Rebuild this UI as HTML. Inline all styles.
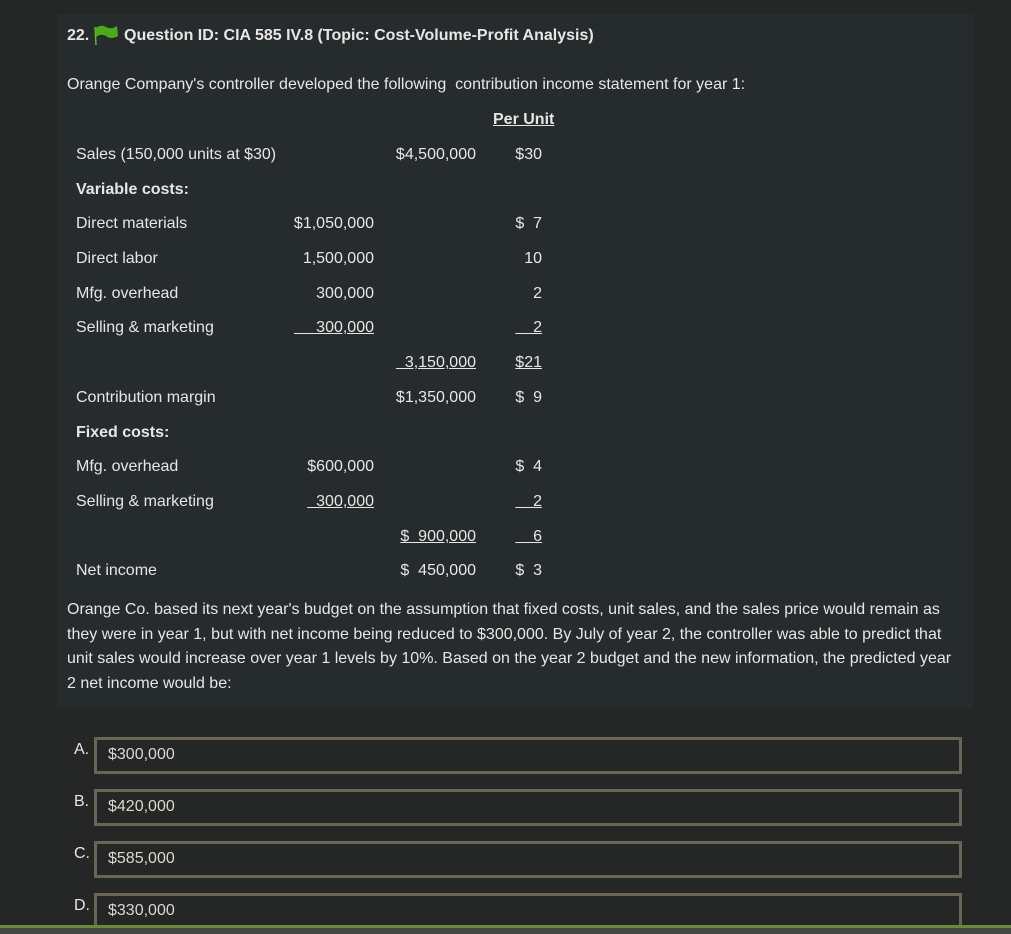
<!DOCTYPE html>
<html><head><style>
body{margin:0;width:1011px;height:934px;background:#252626;font-family:"Liberation Sans",sans-serif;color:#e8e6e3;position:relative;overflow:hidden;font-size:16px}
.panel{position:absolute;left:57px;top:14px;width:916px;height:694px;background:#262b2e}
.a{position:absolute;white-space:nowrap;line-height:18px}
.r{text-align:right}
.u{text-decoration:underline}
.b{font-weight:bold}
.p{position:absolute;left:67px;top:598px;width:892px;line-height:24.5px}
.box{position:absolute;left:94px;width:862px;height:31px;border:3px solid #6b6558;background:#252626}
.box span{position:absolute;left:11px;top:6px;color:#dcd8cf}
.lab{position:absolute;left:74px;color:#e8e6e3}
</style></head><body>
<div class="panel"></div>
<div class="a b" style="left:67px;top:27px">22.</div>
<svg style="position:absolute;left:92px;top:23px" width="28" height="24" viewBox="0 0 28 24"><path d="M3 4 L4 22" stroke="#5fb82b" stroke-width="1.5"/><path d="M3 5 Q10 1 14 4 Q19 7 25 3 L26 13 Q19 17 14 13 Q9 10 4 14 Z" fill="#4aab17"/></svg>
<div class="a b" style="left:124px;top:27px">Question ID: CIA 585 IV.8 (Topic: Cost-Volume-Profit Analysis)</div>
<div class="a" style="left:67px;top:76px">Orange Company's controller developed the following&nbsp; contribution income statement for year 1:</div>
<div class="a b u" style="left:493px;top:111px">Per Unit</div>

<div class="a" style="left:76px;top:146px">Sales (150,000 units at $30)</div>
<div class="a r" style="right:535px;top:146px">$4,500,000</div>
<div class="a r" style="right:469px;top:146px">$30</div>
<div class="a b" style="left:76px;top:181px">Variable costs:</div>
<div class="a" style="left:76px;top:215px">Direct materials</div>
<div class="a r" style="right:637px;top:215px">$1,050,000</div>
<div class="a r" style="right:469px;top:215px">$&nbsp; 7</div>
<div class="a" style="left:76px;top:250px">Direct labor</div>
<div class="a r" style="right:637px;top:250px">1,500,000</div>
<div class="a r" style="right:469px;top:250px">10</div>
<div class="a" style="left:76px;top:285px">Mfg. overhead</div>
<div class="a r" style="right:637px;top:285px">300,000</div>
<div class="a r" style="right:469px;top:285px">2</div>
<div class="a" style="left:76px;top:319px">Selling &amp; marketing</div>
<div class="a r u" style="right:637px;top:319px">&nbsp;&nbsp;&nbsp;&nbsp;&nbsp;300,000</div>
<div class="a r u" style="right:469px;top:319px">&nbsp;&nbsp;&nbsp;&nbsp;2</div>
<div class="a r u" style="right:535px;top:354px">&nbsp;&nbsp;3,150,000</div>
<div class="a r u" style="right:469px;top:354px">$21</div>
<div class="a" style="left:76px;top:389px">Contribution margin</div>
<div class="a r" style="right:535px;top:389px">$1,350,000</div>
<div class="a r" style="right:469px;top:389px">$&nbsp; 9</div>
<div class="a b" style="left:76px;top:424px">Fixed costs:</div>
<div class="a" style="left:76px;top:458px">Mfg. overhead</div>
<div class="a r" style="right:637px;top:458px">$600,000</div>
<div class="a r" style="right:469px;top:458px">$&nbsp; 4</div>
<div class="a" style="left:76px;top:493px">Selling &amp; marketing</div>
<div class="a r u" style="right:637px;top:493px">&nbsp;&nbsp;300,000</div>
<div class="a r u" style="right:469px;top:493px">&nbsp;&nbsp;&nbsp;&nbsp;2</div>
<div class="a r u" style="right:535px;top:528px">$&nbsp; 900,000</div>
<div class="a r u" style="right:469px;top:528px">&nbsp;&nbsp;&nbsp;&nbsp;6</div>
<div class="a" style="left:76px;top:562px">Net income</div>
<div class="a r" style="right:535px;top:562px">$&nbsp; 450,000</div>
<div class="a r" style="right:469px;top:562px">$&nbsp; 3</div>

<div class="p">Orange Co. based its next year's budget on the assumption that fixed costs, unit sales, and the sales price would remain as they were in year 1, but with net income being reduced to $300,000. By July of year 2, the controller was able to predict that unit sales would increase over year 1 levels by 10%. Based on the year 2 budget and the new information, the predicted year 2 net income would be:</div>

<div class="lab" style="top:741px">A.</div><div class="box" style="top:737px"><span>$300,000</span></div>
<div class="lab" style="top:793px">B.</div><div class="box" style="top:789px"><span>$420,000</span></div>
<div class="lab" style="top:845px">C.</div><div class="box" style="top:841px"><span>$585,000</span></div>
<div class="lab" style="top:897px">D.</div><div class="box" style="top:893px"><span>$330,000</span></div>
<div style="position:absolute;left:0;top:925px;width:1011px;height:3px;background:#6a8a35"></div>
<div style="position:absolute;left:0;top:928px;width:1011px;height:6px;background:#444645"></div>
</body></html>
